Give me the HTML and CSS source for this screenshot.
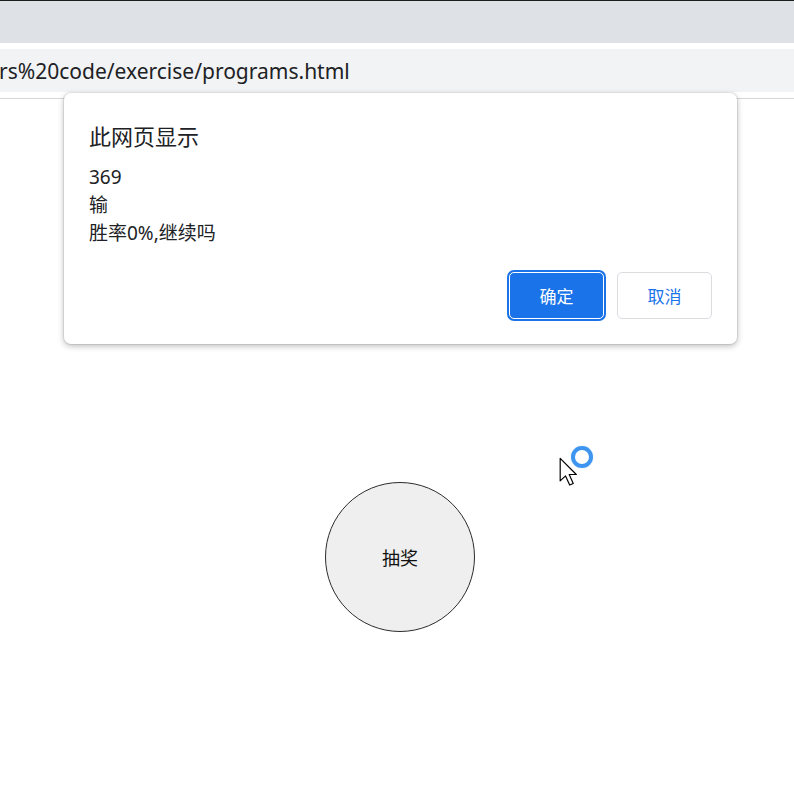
FILE: index.html
```html
<!DOCTYPE html>
<html lang="zh-CN">
<head>
  <meta charset="UTF-8">
  <title>programs</title>
  <link rel="stylesheet" href="styles.css">
</head>
<body>
  <div class="chrome">
    <div class="tabstrip"></div>
    <div class="omnibox">
      <span class="url">rs%20code/exercise/programs.html</span>
    </div>
    <div class="toolbar-edge"></div>
  </div>

  <div class="page">
    <button class="draw-btn">抽奖</button>
  </div>

  <!-- alert box from the browser -->
  <div class="dialog">
    <div class="dialog-title">此网页显示</div>
    <div class="dialog-msg">
      <div>369</div>
      <div>输</div>
      <div>胜率0%,继续吗</div>
    </div>
    <div class="dialog-actions">
      <button class="btn btn-ok">确定</button>
      <button class="btn btn-cancel">取消</button>
    </div>
  </div>

  <svg class="cursor" width="19" height="30" viewBox="0 0 16 25">
    <path d="M1 1 L1 20 L5.5 15.8 L9 23.5 L12 22.2 L8.6 14.6 L14.6 14.6 Z" fill="#fff" stroke="#000" stroke-width="1" stroke-linejoin="round"/>
  </svg>
  <div class="busy"></div>
</body>
</html>
```

FILE: styles.css
```css
body {
  margin: 0;
  background-color: #fff;
  font-family: "Noto Sans", "Noto Sans CJK SC", sans-serif;
  color: #202124;
  overflow: hidden;
}

.tabstrip {
  height: 42px;
  border-top: 1px solid #1d1d1d;
  background-color: #dee1e6;
}

.omnibox {
  margin-top: 6px;
  height: 43px;
  background-color: #f1f3f4;
  display: flex;
  align-items: center;
  overflow: hidden;
}

.omnibox .url {
  margin-left: -1px;
  font-size: 21px;
  white-space: nowrap;
  color: #202124;
}

.toolbar-edge {
  height: 6px;
  border-bottom: 1px solid #d6d6d6;
}

.page {
  padding-top: 383px;
  padding-left: 325px;
}

.draw-btn {
  width: 150px;
  height: 150px;
  border-radius: 50%;
  border: 1px solid #2b2b2b;
  background-color: #efefef;
  font-family: "Noto Sans CJK SC", sans-serif;
  font-size: 18px;
  color: #111;
  padding: 0;
}

.dialog {
  position: absolute;
  left: 64px;
  top: 93px;
  width: 673px;
  box-sizing: border-box;
  padding: 29px 25px 25px 25px;
  background-color: #fff;
  border-radius: 7px;
  box-shadow: 0 0 0 1px rgba(0, 0, 0, 0.07), 0 2px 6px rgba(0, 0, 0, 0.28);
  font-family: "Noto Sans", "Noto Sans CJK SC", sans-serif;
}

.dialog-title {
  font-size: 22px;
  line-height: 28px;
  color: #202124;
}

.dialog-msg {
  margin-top: 13px;
  font-size: 19px;
  line-height: 28px;
  color: #202124;
}

.dialog-actions {
  margin-top: 25px;
  display: flex;
  justify-content: flex-end;
  gap: 13px;
}

.btn {
  width: 95px;
  height: 47px;
  border-radius: 5px;
  font-family: "Noto Sans CJK SC", sans-serif;
  font-size: 17px;
  padding: 0;
}

.btn-ok {
  background-color: #1a73e8;
  border: 1px solid #fff;
  box-shadow: 0 0 0 2px #1a73e8;
  color: #fff;
}

.btn-cancel {
  background-color: #fff;
  border: 1px solid #dadce0;
  color: #1a73e8;
}

.cursor {
  position: absolute;
  left: 559px;
  top: 457px;
}

.busy {
  position: absolute;
  left: 571px;
  top: 446px;
  width: 14px;
  height: 14px;
  border-radius: 50%;
  border: 4px solid #3d95f0;
  box-shadow: 0 0 1px rgba(30, 120, 220, 0.6);
}
```
